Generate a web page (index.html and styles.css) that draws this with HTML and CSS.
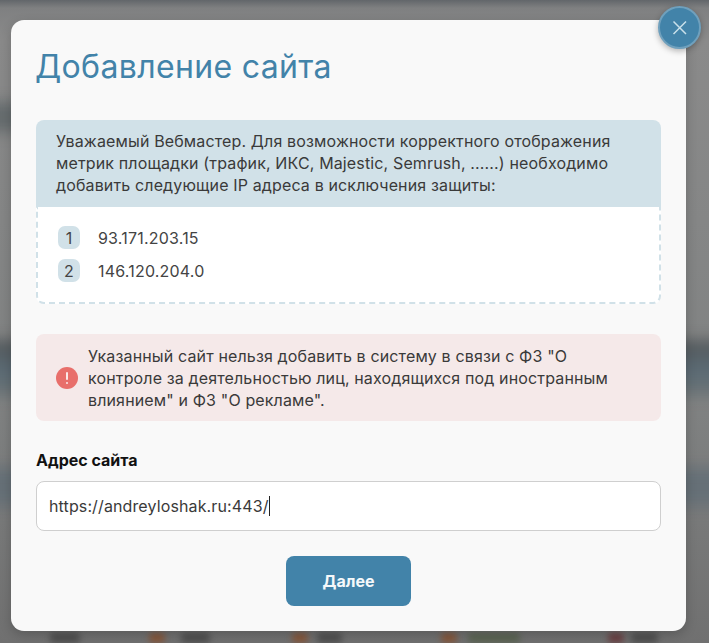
FILE: index.html
```html
<!DOCTYPE html>
<html lang="ru">
<head>
  <meta charset="UTF-8" />
  <title>Добавление сайта</title>
  <link rel="stylesheet" href="styles.css">
</head>
<body>
  <div class="backdrop">
    <span class="smear smear-top"></span>
    <span class="smear smear-mid"></span>
    <span class="smear smear-low"></span>
    <span class="dot dot-1"></span>
    <span class="dot dot-2"></span>
    <span class="dot dot-3"></span>
    <span class="dot dot-4"></span>
    <span class="dot dot-5"></span>
    <span class="dot dot-6"></span>
    <span class="dot dot-7"></span>
    <span class="dot dot-8"></span>
    <span class="dot dot-9"></span>
  </div>

  <main class="modal">
    <button class="close-button" aria-label="Закрыть">
      <svg width="16" height="16" viewBox="0 0 16 16" fill="none" stroke="#c9e0ea" stroke-width="1.5">
        <path d="M1.5 1.5 L14 14 M14 1.5 L1.5 14" />
      </svg>
    </button>

    <h1 class="modal-title">Добавление сайта</h1>

    <section class="ip-panel">
      <p class="ip-panel-head">Уважаемый Вебмастер. Для возможности корректного отображения метрик площадки (трафик, ИКС, Majestic, Semrush, ......) необходимо добавить следующие IP адреса в исключения защиты:</p>
      <ul class="ip-list">
        <li class="ip-row"><span class="ip-num">1</span>93.171.203.15</li>
        <li class="ip-row"><span class="ip-num">2</span>146.120.204.0</li>
      </ul>
    </section>

    <section class="alert">
      <svg class="alert-icon" width="22" height="22" viewBox="0 0 22 22">
        <circle cx="11" cy="11" r="11" fill="#e86f6b" />
        <rect x="10" y="5" width="2" height="8" rx="1" fill="#fbe9e8" />
        <rect x="10" y="15" width="2" height="2" rx="1" fill="#fbe9e8" />
      </svg>
      <p class="alert-text">Указанный сайт нельзя добавить в систему в связи с ФЗ "О контроле за деятельностью лиц, находящихся под иностранным влиянием" и ФЗ "О рекламе".</p>
    </section>

    <label class="field-label" for="site">Адрес сайта</label>
    <div class="field-input"><span id="site">https://andreyloshak.ru:443/</span><span class="caret"></span></div>

    <div class="actions">
      <button class="next-button">Далее</button>
    </div>
  </main>
</body>
</html>
```

FILE: styles.css
```css
/* General Reset */
* {
    margin: 0;
    padding: 0;
    box-sizing: border-box;
}
html, body {
    height: 643px;
    overflow: hidden;
}
body {
    position: relative;
    font-family: 'Inter', 'Noto Sans', sans-serif;
    background: linear-gradient(to bottom, #62666a 0, #7f8081 8px, #8a8a8a 40px, #808282 400px, #707070 643px);
    color: #3a3a3a;
    padding: 20px 23px 12px 11px;
}

/* blurred page behind the modal */
.backdrop {
    position: absolute;
    inset: 0;
    overflow: hidden;
}
.smear {
    position: absolute;
    left: -20px;
    right: -20px;
    filter: blur(7px);
}
.smear-top {
    top: 102px;
    height: 30px;
    right: 680px;
    background: #666c6e;
}
.smear-mid {
    top: 340px;
    height: 56px;
    background: linear-gradient(to bottom, #54585a 0, #5b6b75 55%, #6c7476 100%);
}
.smear-low {
    top: 468px;
    height: 38px;
    background: #667077;
}
.dot {
    position: absolute;
    top: 633px;
    height: 10px;
    border-radius: 4px;
    filter: blur(3px);
    background: #4f4f4f;
}
.dot-1 { left: 50px; width: 30px; }
.dot-2 { left: 149px; width: 16px; background: #85563a; }
.dot-3 { left: 181px; width: 29px; }
.dot-4 { left: 292px; width: 16px; background: #85563a; }
.dot-5 { left: 317px; width: 25px; }
.dot-6 { left: 441px; width: 16px; background: #85563a; }
.dot-7 { left: 468px; width: 52px; background: #5a6452; }
.dot-8 { left: 608px; width: 16px; background: #6a3f42; }
.dot-9 { left: 631px; width: 27px; }

.modal {
    position: relative;
    z-index: 1;
    height: 611px;
    padding: 25px 25px 0;
    background: #f9f9f9;
    border-radius: 13px;
    box-shadow: 0 4px 12px rgba(0, 0, 0, 0.2);
}
.modal-title {
    margin-left: -1px;
    font-size: 32px;
    line-height: 44px;
    font-weight: 400;
    letter-spacing: 0.35px;
    color: #4283a9;
}

.close-button {
    position: absolute;
    top: -14px;
    right: -15px;
    display: flex;
    align-items: center;
    justify-content: center;
    width: 43px;
    height: 43px;
    background: #4283a9;
    border: 2px solid #6fa0bd;
    border-radius: 50%;
    box-shadow: 0 2px 6px rgba(0, 0, 0, 0.3);
}

.ip-panel {
    margin-top: 31px;
    border-radius: 8px;
}
.ip-panel-head {
    height: 87px;
    padding: 10px 20px 0;
    background: #d1e1e8;
    border-radius: 8px 8px 0 0;
    font-size: 16px;
    line-height: 22px;
    letter-spacing: 0.14px;
}
.ip-list {
    list-style: none;
    height: 97px;
    padding: 19px 20px 0;
    background: #fff;
    border: 2px dashed #d1e1e8;
    border-top: 0;
    border-radius: 0 0 8px 8px;
}
.ip-row {
    display: flex;
    align-items: center;
    gap: 18px;
    height: 23px;
    margin-bottom: 10px;
    font-size: 16px;
    letter-spacing: 0.2px;
    color: #444;
}
.ip-num {
    display: flex;
    align-items: center;
    justify-content: center;
    width: 22px;
    height: 23px;
    background: #d1e1e8;
    border-radius: 7px;
}

.alert {
    display: flex;
    align-items: center;
    gap: 10px;
    height: 87px;
    margin-top: 30px;
    padding: 0 30px 0 20px;
    background: #f5e9e9;
    border-radius: 8px;
}
.alert-icon {
    flex: none;
}
.alert-text {
    font-size: 16px;
    line-height: 22px;
    letter-spacing: 0.14px;
}

.field-label {
    display: block;
    margin-top: 29px;
    font-size: 16px;
    line-height: 20px;
    font-weight: 700;
    color: #111;
}
.field-input {
    display: flex;
    align-items: center;
    height: 50px;
    margin-top: 11px;
    padding: 0 12px;
    background: #fff;
    border: 1px solid #cfcfcf;
    border-radius: 8px;
    font-size: 16px;
    letter-spacing: 0.12px;
}
.caret {
    width: 1px;
    height: 20px;
    background: #222;
}

.actions {
    display: flex;
    justify-content: center;
    margin-top: 25px;
}
.next-button {
    width: 125px;
    height: 50px;
    background: #4283a9;
    border: none;
    border-radius: 8px;
    color: #f4f8fa;
    font-family: inherit;
    font-size: 16px;
    font-weight: 700;
}
```
